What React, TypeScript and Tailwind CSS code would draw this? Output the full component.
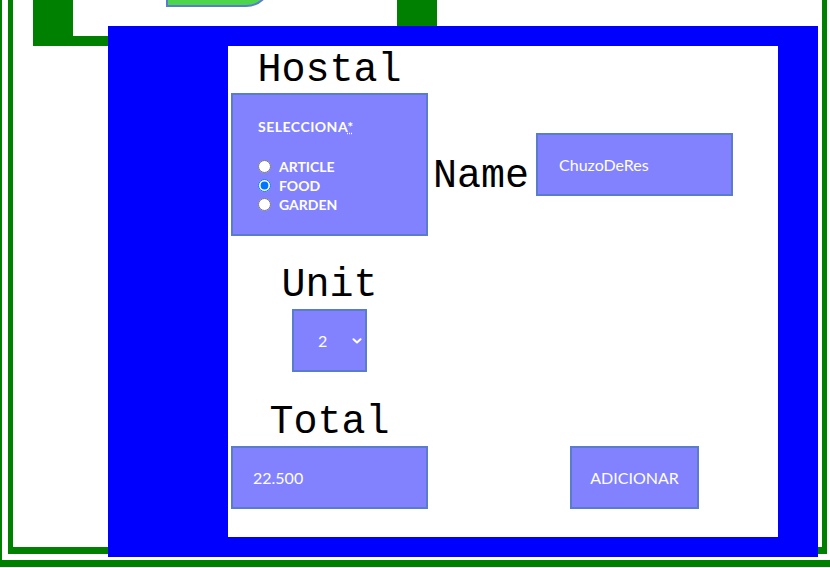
import { useState } from 'react';

const mono = { fontFamily: '"Liberation Mono", "DejaVu Sans Mono", monospace' };
const sans = { fontFamily: 'Lato, "Open Sans", sans-serif' };

const boxClass =
  'bg-[#8282ff] border-2 border-[#5a7cce] text-white outline-none';

const categories = ['ARTICLE', 'FOOD', 'GARDEN'];

function Heading({ children }: { children: string }) {
  return (
    <h2
      style={mono}
      className="w-[197px] text-center text-[40px] leading-[44px] text-black"
    >
      {children}
    </h2>
  );
}

export default function App() {
  const [category, setCategory] = useState('FOOD');

  return (
    <div className="relative h-[568px] w-[830px] overflow-hidden bg-white">
      {/* page frames behind the modal */}
      <div className="h-[567px] w-[840px] border-b-[7px] border-l-2 border-[#008000] pb-[6px] pl-[6px]">
        <div className="h-full w-[819px] border-x-[5px] border-b-[7px] border-[#008000] pl-[20px]">
          <div className="flex h-[46px] w-[404px] border-x-[40px] border-b-[10px] border-[#008000] pl-[93px]">
            <div className="-mt-[24px] h-[31px] w-[106px] rounded-br-[26px] border-2 border-[#5a7cce] bg-[#4cd64c]" />
          </div>
        </div>
      </div>

      {/* modal */}
      <div className="absolute left-[108px] top-[26px] h-[531px] w-[710px] border-b-[20px] border-l-[120px] border-r-[40px] border-t-[20px] border-[#0000ff] bg-white">
        <div className="flex flex-col pl-[3px] pt-[3px]">
          <Heading>Hostal</Heading>

          <div className="flex items-start">
            <div
              style={sans}
              className={`${boxClass} h-[143px] w-[197px] pl-[25px] pt-[22px] font-bold`}
            >
              <div className="text-[14px] leading-[20px] tracking-[0.5px]">
                SELECCIONA
                <abbr className="underline decoration-dotted" title="required">
                  *
                </abbr>
              </div>
              <div className="mt-[20px] flex flex-col">
                {categories.map((c) => (
                  <label
                    key={c}
                    className="flex h-[19px] items-center text-[14px] leading-[19px]"
                  >
                    <input
                      type="radio"
                      name="category"
                      checked={category === c}
                      onChange={() => setCategory(c)}
                      className="mr-[8px] h-[13px] w-[13px]"
                    />
                    {c}
                  </label>
                ))}
              </div>
            </div>

            <span
              style={mono}
              className="ml-[5px] mt-[62px] text-[40px] leading-[44px] text-black"
            >
              Name
            </span>

            <input
              style={sans}
              readOnly
              value="ChuzoDeRes"
              className={`${boxClass} ml-[7px] mt-[40px] h-[63px] w-[197px] pl-[21px] text-[16px]`}
            />
          </div>

          <div className="mt-[28px]">
            <Heading>Unit</Heading>
          </div>
          <div className="mt-px flex w-[197px] justify-center">
            <div
              style={sans}
              className={`${boxClass} flex h-[63px] w-[75px] items-center pl-[24px] text-[16px]`}
            >
              <span className="w-[34px]">2</span>
              <svg width="10" height="6" viewBox="0 0 10 6" fill="none">
                <path
                  d="M1.5 1.2 L5 4.5 L8.5 1.2"
                  stroke="white"
                  strokeWidth="2"
                  strokeLinecap="round"
                  strokeLinejoin="round"
                />
              </svg>
            </div>
          </div>

          <div className="mt-[29px]">
            <Heading>Total</Heading>
          </div>
          <div className="mt-px flex items-start">
            <input
              style={sans}
              readOnly
              value="22.500"
              className={`${boxClass} h-[63px] w-[197px] pl-[20px] text-[16px]`}
            />
            <button
              type="button"
              style={sans}
              className={`${boxClass} ml-[142px] h-[63px] w-[129px] text-[16px]`}
            >
              ADICIONAR
            </button>
          </div>
        </div>
      </div>
    </div>
  );
}
